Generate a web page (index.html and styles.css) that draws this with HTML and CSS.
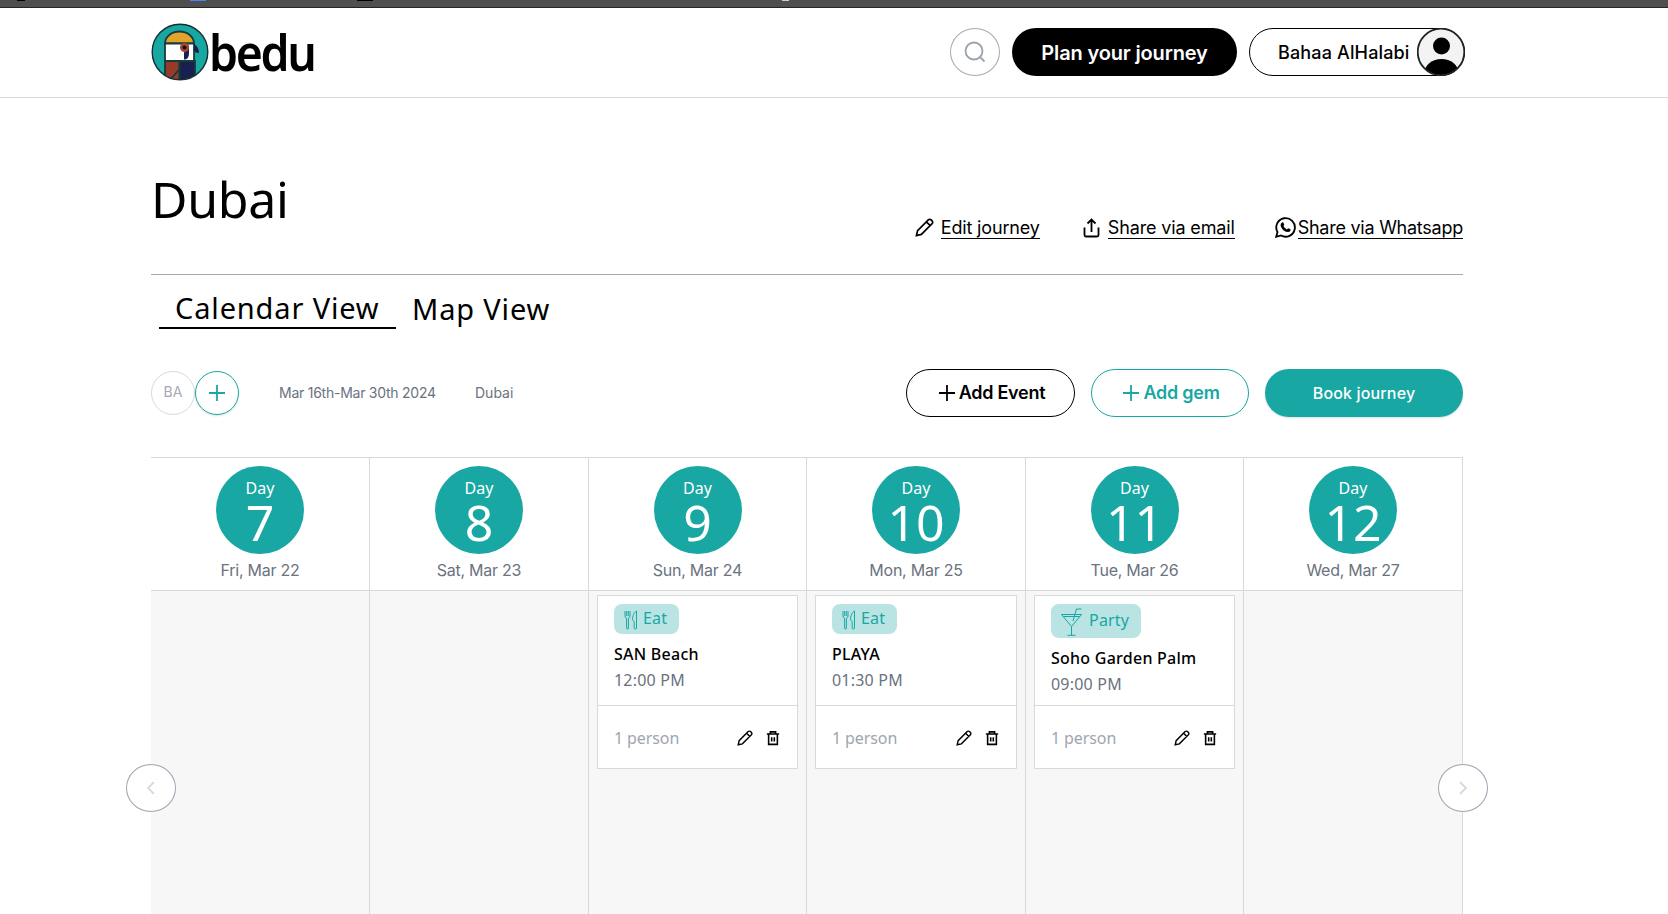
FILE: index.html
```html
<!DOCTYPE html>
<html lang="en">
<head>
<meta charset="utf-8">
<title>bedu – Dubai</title>
<link rel="stylesheet" href="styles.css">
</head>
<body>
<svg class="defs" width="0" height="0">
  <symbol id="pencil" viewBox="0 0 20 20"><path d="M1.500 18.500l1.200-5.200L14 2a2.100 2.100 0 0 1 3 0l1 1a2.100 2.100 0 0 1 0 3L6.700 17.300zM12 4l4 4"/></symbol>
  <symbol id="trash" viewBox="0 0 16 18"><path d="M1 4.500h14M5 4.500V2h6v2.500M3 4.500V16.300h10V4.500M6.500 8v5M9.500 8v5"/></symbol>
  <symbol id="plus" viewBox="0 0 16 16"><path d="M8 0v16M0 8h16"/></symbol>
  <symbol id="eat" viewBox="0 0 14 20"><path d="M1 1v5q0 2 1.600 2.200V18q0 1 .9 1t.9-1V8.200Q6 8 6 6V1M2.700 1v5M4.300 1v5M12.500 1C10 2 8.500 6 8.500 10l1.700 1.500V18q0 1 1.100 1t1.200-1z"/></symbol>
  <symbol id="glass" viewBox="0 0 22 28"><path d="M.5 6.500h20L10.500 18.500zM2.500 8.500h16M10.500 18.500V27M6.500 27.300h8M12 13l3.500-12h5"/></symbol>
</svg>
<div class="chrome"><i class="dot d1"></i><i class="dot d2"></i><i class="dot d3"></i><i class="dot d4"></i></div>
<header class="header">
  <div class="logo">
    <svg width="58" height="58" viewBox="0 0 58 58">
      <defs><clipPath id="disc"><circle cx="29" cy="29" r="27.500"/></clipPath></defs>
      <circle cx="29" cy="29" r="28" fill="#18a7a3"/>
      <g clip-path="url(#disc)" stroke="#163c3c">
        <path d="M14 20.500a14.500 12 0 0 1 29 0z" fill="#e0a32b"/>
        <path d="M14 20.500h29V38H14z" fill="#fff"/>
        <path d="M14 38h14.500v20H14z" fill="#963a29"/>
        <path d="M28.500 38H44v20H28.500z" fill="#17204f"/>
        <path d="M28.500 46L20 56" fill="none"/>
      </g>
      <path d="M33 36.500v-7l5-8v9q0 6-5 6z" fill="#17204f"/>
      <circle cx="33.500" cy="24.500" r="4.500" fill="#a84532"/><circle cx="33.500" cy="24.500" r="2" fill="#111"/>
      <path d="M43 21q5 3 5 9-5 0-5-4z" fill="#17204f"/>
      <circle cx="29" cy="29" r="27.800" fill="none" stroke="#17302f" stroke-width="1.400"/>
    </svg>
    <span class="wordmark">bedu</span>
  </div>
  <nav class="actions">
    <button class="search"><svg width="22" height="22" viewBox="0 0 22 22"><circle cx="10" cy="10" r="8.500"/><path d="M16 16l4.500 4.500"/></svg></button>
    <button class="plan"><span>Plan your journey</span></button>
    <button class="user"><span>Bahaa AlHalabi</span>
      <svg width="48" height="48" viewBox="0 0 48 48"><defs><clipPath id="av"><circle cx="24" cy="24" r="23"/></clipPath></defs><circle cx="24" cy="24" r="23.300" fill="#f3f3f3"/><g clip-path="url(#av)"><circle cx="24.500" cy="18" r="8.500"/><ellipse cx="24.500" cy="45" rx="17" ry="14"/></g><circle cx="24" cy="24" r="23.300" fill="none" stroke="#222"/></svg>
    </button>
  </nav>
</header>
<main class="page">
  <section class="title">
    <h1>Dubai</h1>
    <div class="links">
      <a class="edit"><svg width="19" height="19"><use href="#pencil"/></svg><span>Edit journey</span></a>
      <a class="mail"><svg width="17" height="20" viewBox="0 0 17 20"><path d="M1.500 9.500V17q0 1.500 1.500 1.500h11q1.500 0 1.500-1.500V9.500M8.500 14V1.500M4.500 5.500l4-4 4 4"/></svg><span>Share via email</span></a>
      <a class="wa"><svg width="21" height="21" viewBox="0 0 21 21"><path d="M1.200 19.800l1.300-4.800A9.300 9.300 0 1 1 6 18.500z"/><path class="phone" d="M7.300 5.300l1 .1 1 2.300-.9 1.400q1.200 2.300 3.500 3.400l1.300-1.300 2.300 1.100q.3 2.700-2.300 2.800-5-.3-7.600-6.200-.4-2.300 1.700-3.600z"/></svg><span>Share via Whatsapp</span></a>
    </div>
  </section>
  <div class="tabs"><a class="tab active"><span>Calendar View</span></a><a class="tab"><span>Map View</span></a></div>
  <section class="tools">
    <div class="avatar">BA</div>
    <button class="invite"><svg width="16" height="16"><use href="#plus"/></svg></button>
    <span class="range">Mar 16th-Mar 30th 2024</span>
    <span class="place">Dubai</span>
    <div class="buttons">
      <button class="btn event"><svg width="16" height="16"><use href="#plus"/></svg><span>Add Event</span></button>
      <button class="btn gem"><svg width="16" height="16"><use href="#plus"/></svg><span>Add gem</span></button>
      <button class="btn book"><span>Book journey</span></button>
    </div>
  </section>
  <section class="calendar">
    <div class="col"><div class="head"><div class="day"><small>Day</small><b>7</b></div><time>Fri, Mar 22</time></div></div>
    <div class="col"><div class="head"><div class="day"><small>Day</small><b>8</b></div><time>Sat, Mar 23</time></div></div>
    <div class="col"><div class="head"><div class="day"><small>Day</small><b>9</b></div><time>Sun, Mar 24</time></div>
      <article class="card"><div class="info"><div class="badge"><svg width="14" height="20"><use href="#eat"/></svg><span>Eat</span></div><h3>SAN Beach</h3><p>12:00 PM</p></div>
        <footer><span>1 person</span><svg width="16" height="16"><use href="#pencil"/></svg><svg width="14" height="16"><use href="#trash"/></svg></footer></article></div>
    <div class="col"><div class="head"><div class="day"><small>Day</small><b>10</b></div><time>Mon, Mar 25</time></div>
      <article class="card"><div class="info"><div class="badge"><svg width="14" height="20"><use href="#eat"/></svg><span>Eat</span></div><h3>PLAYA</h3><p>01:30 PM</p></div>
        <footer><span>1 person</span><svg width="16" height="16"><use href="#pencil"/></svg><svg width="14" height="16"><use href="#trash"/></svg></footer></article></div>
    <div class="col"><div class="head"><div class="day"><small>Day</small><b>11</b></div><time>Tue, Mar 26</time></div>
      <article class="card"><div class="info"><div class="badge party"><svg width="22" height="28"><use href="#glass"/></svg><span>Party</span></div><h3>Soho Garden Palm</h3><p>09:00 PM</p></div>
        <footer><span>1 person</span><svg width="16" height="16"><use href="#pencil"/></svg><svg width="14" height="16"><use href="#trash"/></svg></footer></article></div>
    <div class="col"><div class="head"><div class="day"><small>Day</small><b>12</b></div><time>Wed, Mar 27</time></div></div>
    <button class="arrow prev"><svg width="8" height="14" viewBox="0 0 8 14"><path d="M7 1L1 7l6 6"/></svg></button>
    <button class="arrow next"><svg width="8" height="14" viewBox="0 0 8 14"><path d="M1 1l6 6-6 6"/></svg></button>
  </section>
</main>
</body>
</html>
```
FILE: styles.css
```css
* { box-sizing: border-box; }
html, body { height: 100%; overflow: hidden; }
body { margin: 0; display: flex; flex-direction: column; background: #fff; color: #000; font-family: Inter, "Liberation Sans", sans-serif; }
button { font: inherit; color: inherit; background: none; border: 0; padding: 0; }
svg { fill: none; stroke: currentColor; stroke-width: 1.8; flex: none; display: block; }
span, time, h1, h3, p { white-space: nowrap; }
.defs { position: absolute; }

.chrome { position: relative; height: 8px; flex: none; background: #4f4f4f; border-bottom: 1px solid #262626; }
.dot { position: absolute; top: 0; height: 1px; }
.d1 { left: 17px; width: 8px; background: #000; }
.d2 { left: 190px; width: 16px; background: #4b86f0; }
.d3 { left: 357px; width: 16px; background: #000; }
.d4 { left: 782px; width: 7px; background: #ccc; }

.header { height: 90px; flex: none; border-bottom: 1px solid #d9d9d9; padding: 0 203px 0 150px; display: flex; justify-content: space-between; align-items: flex-start; }
.logo { display: flex; padding: 15px 0 0 .5px; }
.logo svg { stroke: none; }
.wordmark { font: 600 51px/56px "Noto Sans", sans-serif; letter-spacing: -2.6px; transform: scaleX(.91); transform-origin: left; }
.actions { display: flex; padding-top: 20px; align-items: flex-start; }
.search { width: 50px; height: 48px; border: 1px solid #a5a9b3; border-radius: 50%; display: grid; place-items: center; color: #9ca3af; margin-right: 12px; }
.plan { width: 225px; height: 48px; border-radius: 24px; background: #000; color: #fff; font-size: 20px; font-weight: 600; letter-spacing: -.15px; margin-right: 12px; padding-top: 1px; }
.user { width: 216px; height: 48px; border: 1px solid #000; border-radius: 24px; display: flex; align-items: center; font-size: 18px; font-weight: 500; letter-spacing: .15px; padding-left: 28px; }
.user svg { stroke: none; fill: #000; margin-left: auto; margin-right: -1px; }

.page { width: 1312px; margin-left: 151px; flex: 1; display: flex; flex-direction: column; }
.title { height: 177px; flex: none; border-bottom: 1px solid #a4a9b5; display: flex; justify-content: space-between; align-items: flex-start; }
h1 { margin: 67px 0 0; font: 400 50px/68px "Noto Sans", sans-serif; letter-spacing: -.3px; }
.links { display: flex; font-size: 18px; letter-spacing: -.15px; padding-top: 118px; }
.links a { display: flex; height: 23px; align-items: center; }
.links span { line-height: 23px; height: 23px; border-bottom: 1px solid #000; }
.edit { gap: 7px; margin-right: 43px; }
.mail { gap: 8px; margin-right: 40px; }
.wa { gap: 2px; }
.wa span { letter-spacing: -.25px; }
.phone { fill: #000; stroke: none; }

.tabs { height: 54px; flex: none; display: flex; padding: 14px 0 0 8px; font: 400 29px/39px "Noto Sans", sans-serif; letter-spacing: .85px; }
.tab { height: 40px; padding: 0 16px; }
.tab.active { border-bottom: 2px solid #000; width: 237px; line-height: 37px; }

.tools { height: 128px; flex: none; display: flex; align-items: flex-start; padding-top: 40px; }
.avatar, .invite { width: 44px; height: 44px; margin-top: 2px; border-radius: 50%; border: 1px solid #d9d9d9; display: grid; place-items: center; }
.avatar { color: #a5a9b3; font-size: 14px; line-height: 40px; align-items: start; }
.invite { border-color: #18a7a3; color: #18a7a3; box-shadow: 0 1px 2px #0002; }
.range, .place { color: #6b7280; font-size: 14px; line-height: 48px; }
.range { margin-left: 40px; letter-spacing: -.25px; width: 156px; }
.place { margin-left: 40px; }
.buttons { margin-left: auto; display: flex; gap: 16px; }
.btn { height: 48px; border-radius: 24px; border: 1px solid; display: flex; justify-content: center; align-items: center; gap: 4px; font-size: 18px; font-weight: 600; letter-spacing: -.25px; padding-left: 3px; }
.btn span { margin-top: -1px; }
.event { width: 169px; }
.gem { width: 158px; color: #18a7a3; }
.book { width: 198px; background: #18a7a3; color: #fff; border: 0; padding: 0; font-size: 16px; font-weight: 500; letter-spacing: .15px; box-shadow: 0 1px 2px #0002; }
.book span { margin-top: 0; }

.calendar { position: relative; flex: 1; display: grid; grid-template-columns: 219px 219px 218px 219px 218px 219px; border-top: 1px solid #d9d9d9; }
.col { background: #f7f7f7; border-right: 1px solid #d9d9d9; padding-right: 8px; }
.head { height: 133px; margin-right: -8px; background: #fff; border-bottom: 1px solid #d9d9d9; padding-top: 8px; display: flex; flex-direction: column; align-items: center; }
.day { width: 88px; height: 88px; flex: none; border-radius: 50%; background: #18a7a3; color: #fff; font-family: "Noto Sans", sans-serif; display: flex; flex-direction: column; align-items: center; }
.day small { font-size: 16px; line-height: 22px; margin-top: 11px; }
.day b { font-size: 50px; font-weight: 400; line-height: 50px; margin-top: -2px; }
.head time { color: #6b7280; font-size: 16px; line-height: 22px; margin-top: 5px; letter-spacing: -.25px; }

.card { margin: 4px 0 0 8px; height: 174px; background: #fff; border: 1px solid #d9d9d9; display: flex; flex-direction: column; font: 400 16px/24px "Noto Sans", sans-serif; letter-spacing: .2px; }
.info { height: 110px; padding: 8px 16px 0; display: flex; flex-direction: column; align-items: flex-start; border-bottom: 1px solid #d9d9d9; }
.badge { height: 30px; width: 65px; border-radius: 8px; background: #b9e4e3; color: #18a7a3; display: flex; align-items: center; gap: 5px; padding-left: 10px; }
.badge svg { stroke-width: 1; margin-top: 2px; }
.badge span { margin-top: -2px; }
.party { width: 90px; height: 34px; gap: 6px; }
h3 { margin: 8px 0 0; font: 500 16px/24px "Noto Sans", sans-serif; letter-spacing: .25px; }
.card p { margin: 2px 0 0; color: #6b7280; }
footer { flex: 1; display: flex; align-items: center; padding: 2px 17px 0 16px; color: #a0a5b0; }
footer span { margin-right: auto; letter-spacing: -.1px; }
footer svg { color: #000; }
footer svg + svg { margin-left: 13px; }

.arrow { position: absolute; top: 306px; width: 50px; height: 48px; border: 1px solid #a0a3b0; border-radius: 50%; background: #fff; color: #d9d9d9; display: grid; place-items: center; }
.prev { left: -25px; }
.next { right: -25px; }
```
